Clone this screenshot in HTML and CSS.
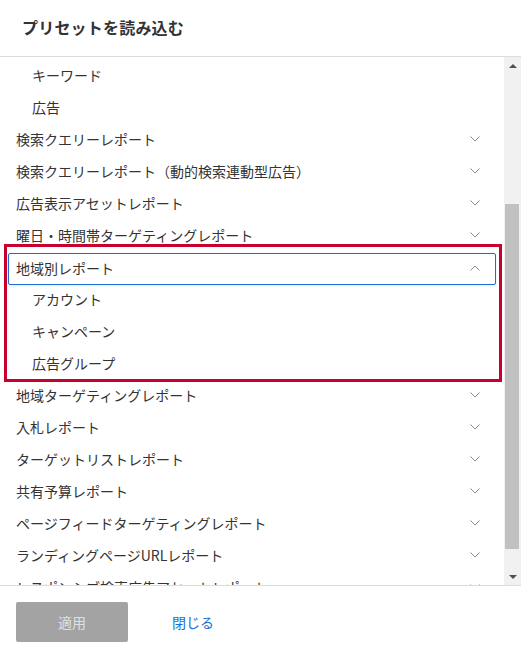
FILE: index.html
```html
<!DOCTYPE html>
<html lang="ja">

<head>
    <meta charset="UTF-8">
    <meta name="viewport" content="width=device-width, initial-scale=1.0">
    <title>プリセットを読み込む</title>
    <link rel="stylesheet" href="styles.css">
</head>

<body>
    <div class="dialog">
        <div class="dialog-header">
            <h2>プリセットを読み込む</h2>
        </div>

        <div class="dialog-body">
            <ul class="preset-list">
                <li class="sub-item">キーワード</li>
                <li class="sub-item">広告</li>
                <li class="group">検索クエリーレポート<svg class="chevron" viewBox="0 0 10 6"><polyline points="0.5,0.5 5,5 9.5,0.5" /></svg></li>
                <li class="group">検索クエリーレポート（動的検索連動型広告）<svg class="chevron" viewBox="0 0 10 6"><polyline points="0.5,0.5 5,5 9.5,0.5" /></svg></li>
                <li class="group">広告表示アセットレポート<svg class="chevron" viewBox="0 0 10 6"><polyline points="0.5,0.5 5,5 9.5,0.5" /></svg></li>
                <li class="group">曜日・時間帯ターゲティングレポート<svg class="chevron" viewBox="0 0 10 6"><polyline points="0.5,0.5 5,5 9.5,0.5" /></svg></li>
                <li class="group open">
                    <div class="group-head">地域別レポート<svg class="chevron" viewBox="0 0 10 6"><polyline points="0.5,5.5 5,1 9.5,5.5" /></svg></div>
                </li>
                <li class="sub-item">アカウント</li>
                <li class="sub-item">キャンペーン</li>
                <li class="sub-item">広告グループ</li>
                <li class="group">地域ターゲティングレポート<svg class="chevron" viewBox="0 0 10 6"><polyline points="0.5,0.5 5,5 9.5,0.5" /></svg></li>
                <li class="group">入札レポート<svg class="chevron" viewBox="0 0 10 6"><polyline points="0.5,0.5 5,5 9.5,0.5" /></svg></li>
                <li class="group">ターゲットリストレポート<svg class="chevron" viewBox="0 0 10 6"><polyline points="0.5,0.5 5,5 9.5,0.5" /></svg></li>
                <li class="group">共有予算レポート<svg class="chevron" viewBox="0 0 10 6"><polyline points="0.5,0.5 5,5 9.5,0.5" /></svg></li>
                <li class="group">ページフィードターゲティングレポート<svg class="chevron" viewBox="0 0 10 6"><polyline points="0.5,0.5 5,5 9.5,0.5" /></svg></li>
                <li class="group">ランディングページURLレポート<svg class="chevron" viewBox="0 0 10 6"><polyline points="0.5,0.5 5,5 9.5,0.5" /></svg></li>
                <li class="group">レスポンシブ検索広告アセットレポート<svg class="chevron" viewBox="0 0 10 6"><polyline points="0.5,0.5 5,5 9.5,0.5" /></svg></li>
            </ul>

            <div class="scrollbar">
                <div class="scroll-btn"><span class="arrow-up"></span></div>
                <div class="scroll-track">
                    <div class="scroll-thumb"></div>
                </div>
                <div class="scroll-btn"><span class="arrow-down"></span></div>
            </div>

            <!-- annotation -->
            <div class="highlight"></div>
        </div>

        <div class="dialog-footer">
            <button class="btn-apply" disabled>適用</button>
            <a class="btn-close" href="#">閉じる</a>
        </div>
    </div>
</body>

</html>
```

FILE: styles.css
```css
body {
    font-family: "Noto Sans CJK JP", "Noto Sans", sans-serif;
    background-color: #fff;
    margin: 0;
    padding: 0;
    color: #333;
}

.dialog {
    width: 521px;
    height: 649px;
    display: flex;
    flex-direction: column;
}

.dialog-header {
    height: 56px;
    border-bottom: 1px solid #dcdcdc;
    display: flex;
    align-items: center;
    padding-left: 22px;
    flex-shrink: 0;
}

.dialog-header h2 {
    margin: 0 0 2px 0;
    font-size: 16px;
    font-weight: bold;
    color: #333;
    letter-spacing: 0.2px;
}

.dialog-body {
    position: relative;
    height: 528px;
    display: flex;
    flex-shrink: 0;
}

.preset-list {
    list-style: none;
    margin: 0;
    padding: 3px 0 0 0;
    flex: 1;
    overflow: hidden;
    font-size: 14px;
}

.preset-list li {
    height: 32px;
    display: flex;
    align-items: center;
    box-sizing: border-box;
    padding-bottom: 2px;
}

.sub-item {
    padding-left: 32px;
}

.group {
    padding-left: 16px;
    padding-right: 24px;
    justify-content: space-between;
}

.preset-list .group.open {
    padding: 1px 8px 0 8px;
}

.group-head {
    flex: 1;
    height: 32px;
    display: flex;
    align-items: center;
    justify-content: space-between;
    box-sizing: border-box;
    padding: 0 15px 2px 7px;
    border: 1px solid #1a6fd1;
    border-radius: 2px;
    box-shadow: 0 1px 3px rgba(26, 111, 209, 0.12);
}

.chevron {
    width: 10px;
    height: 6px;
    flex-shrink: 0;
}

.chevron polyline {
    fill: none;
    stroke: #8a8a8a;
    stroke-width: 1;
}

.scrollbar {
    width: 17px;
    background-color: #f1f1f1;
    display: flex;
    flex-direction: column;
    flex-shrink: 0;
}

.scroll-btn {
    height: 17px;
    display: flex;
    align-items: center;
    justify-content: center;
}

.arrow-up {
    border-left: 4px solid transparent;
    border-right: 4px solid transparent;
    border-bottom: 4px solid #505050;
}

.arrow-down {
    border-left: 4px solid transparent;
    border-right: 4px solid transparent;
    border-top: 4px solid #505050;
}

.scroll-track {
    flex: 1;
    padding: 0 2px 0 1px;
}

.scroll-thumb {
    margin-top: 130px;
    height: 345px;
    background-color: #c1c1c1;
}

.highlight {
    position: absolute;
    left: 4px;
    top: 187px;
    width: 498px;
    height: 138px;
    box-sizing: border-box;
    border: 3px solid #c8002d;
    pointer-events: none;
}

.dialog-footer {
    border-top: 1px solid #dcdcdc;
    padding: 16px 16px 0 16px;
    display: flex;
    align-items: center;
    gap: 44px;
}

.btn-apply {
    width: 112px;
    height: 40px;
    background-color: #a3a3a3;
    color: #e0e0e0;
    border: none;
    border-radius: 2px;
    font-family: inherit;
    font-size: 14px;
}

.btn-close {
    color: #1a6fd1;
    text-decoration: none;
    font-size: 14px;
}
```
